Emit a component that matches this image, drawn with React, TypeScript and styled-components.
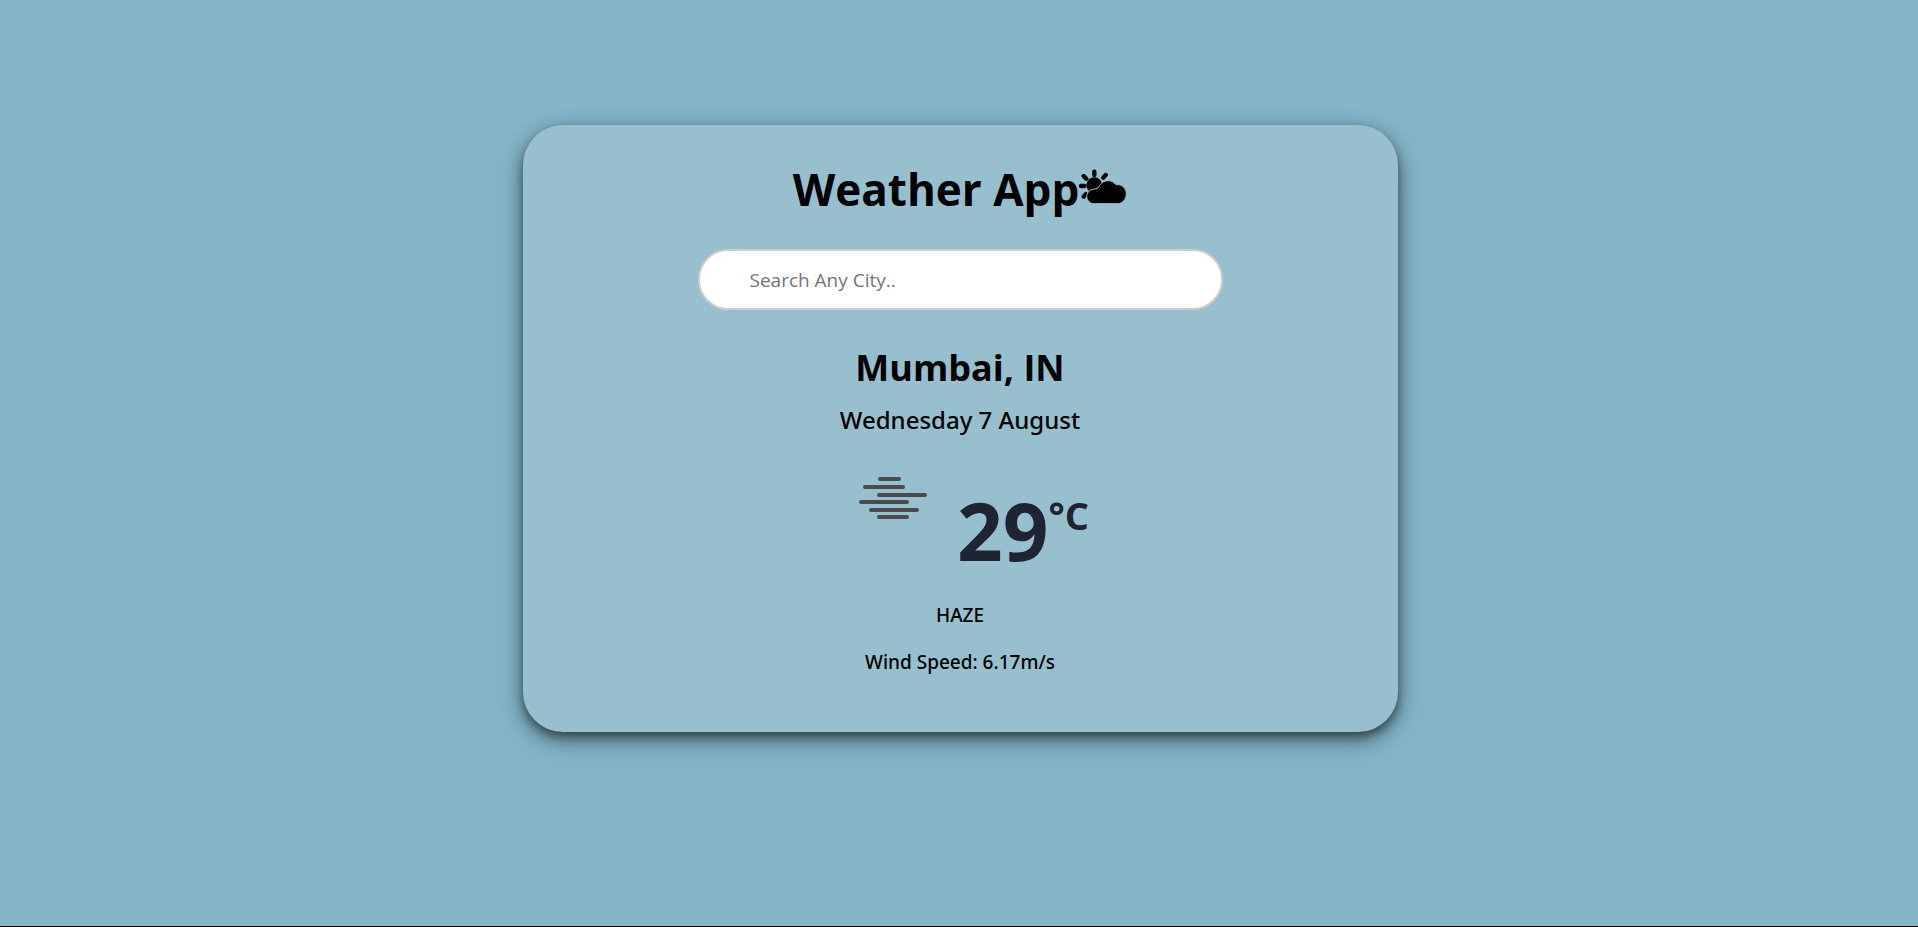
import React from "react";
import styled, { createGlobalStyle } from "styled-components";

const GlobalStyle = createGlobalStyle`
  * { box-sizing: border-box; }
  body {
    margin: 0;
    background: #000;
    font-family: "Segoe UI", "Open Sans", "Noto Sans", sans-serif;
    color: #000;
  }
`;

const Page = styled.main`
  display: flex;
  justify-content: center;
  align-items: flex-start;
  min-height: calc(100vh - 1px);
  padding: 125px 16px 48px 18px;
  background: #84b5c9;
`;

const Card = styled.section`
  display: flex;
  flex-direction: column;
  align-items: center;
  width: 100%;
  max-width: 875px;
  padding: 32px 24px 54px;
  border-radius: 40px;
  background: #98bfce;
  box-shadow: 0 5px 8px rgba(0, 0, 0, 0.35), 0 7px 20px rgba(0, 0, 0, 0.4), 0 10px 40px rgba(0, 0, 0, 0.1);
`;

const Title = styled.h1`
  display: flex;
  align-items: center;
  margin: 0 0 28px;
  font-size: 44px;
  font-weight: 700;
  line-height: 64px;
`;

const TitleIcon = styled.svg`
  width: 48px;
  height: 36px;
  margin-bottom: 4px;
`;

const SearchForm = styled.form`
  display: flex;
  justify-content: center;
  width: 100%;
`;

const SearchInput = styled.input`
  width: 525px;
  max-width: 100%;
  height: 61px;
  padding: 0 50px;
  border: 2px solid #ccc;
  border-radius: 30px;
  background: #fff;
  font: 400 19px/28px "Segoe UI", "Open Sans", "Noto Sans", sans-serif;
  color: #333;
  &::placeholder { color: #757575; opacity: 1; }
`;

const City = styled.h2`
  margin: 32px 0 0;
  font-size: 36px;
  font-weight: 700;
  line-height: 52px;
`;

const DateLine = styled.p`
  margin: 8px 0 0;
  font-family: "Segoe UI", "Noto Sans", "Open Sans", sans-serif;
  font-size: 24px;
  font-weight: 500;
  line-height: 36px;
`;

const Reading = styled.div`
  display: flex;
  align-items: flex-start;
  margin: 10px 0 0 12px;
`;

const HazeIcon = styled.svg`
  width: 100px;
  height: 100px;
`;

const Temperature = styled.p`
  display: flex;
  align-items: flex-start;
  margin: 29px 0 0 14px;
  font-size: 80px;
  font-weight: 700;
  line-height: 106px;
  color: #1f2433;
`;

const Unit = styled.span`
  margin-top: 12px;
  font-size: 38px;
  font-weight: 700;
  line-height: 52px;
`;

const Detail = styled.p`
  margin: 16px 0 0;
  font-family: "Segoe UI", "Noto Sans", "Open Sans", sans-serif;
  font-size: 19px;
  font-weight: 500;
  line-height: 31px;

  ${Reading} + & { margin-top: 17px; }
`;

export default function App() {
  return (
    <>
      <GlobalStyle />
      <Page>
        <Card>
          <Title>
            Weather App
            <TitleIcon viewBox="0 0 144 108" aria-hidden="true">
              <g stroke="#000" strokeWidth="13" strokeLinecap="round">
                <path d="M46 8v10M80 18l-7 8M6 51h10M14 21l8 8M14 83l7-8" />
              </g>
              <circle cx="46" cy="49" r="24" />
              <path
                d="M46 104a21 21 0 0 1-3-43c6-1 10-2 14-4 6-11 15-22 31-22 10 0 18 5 23 12 18-2 31 11 31 28 0 16-12 29-27 29z"
                stroke="#98bfce"
                strokeWidth="3"
              />
            </TitleIcon>
          </Title>
          <SearchForm onSubmit={(e) => e.preventDefault()}>
            <SearchInput type="text" name="city" aria-label="Search any city" placeholder="Search Any City.." />
          </SearchForm>
          <City>Mumbai, IN</City>
          <DateLine>Wednesday 7 August</DateLine>
          <Reading>
            <HazeIcon viewBox="0 0 100 100" role="img" aria-label="Haze">
              <path
                d="M37 31h19M22 39h38M36 47h46M18 54h46M28 62h46M36 69h28"
                stroke="#4b4b4d"
                strokeWidth="4"
                strokeLinecap="round"
              />
            </HazeIcon>
            <Temperature>
              29<Unit>°C</Unit>
            </Temperature>
          </Reading>
          <Detail>HAZE</Detail>
          <Detail>Wind Speed: 6.17m/s</Detail>
        </Card>
      </Page>
    </>
  );
}
